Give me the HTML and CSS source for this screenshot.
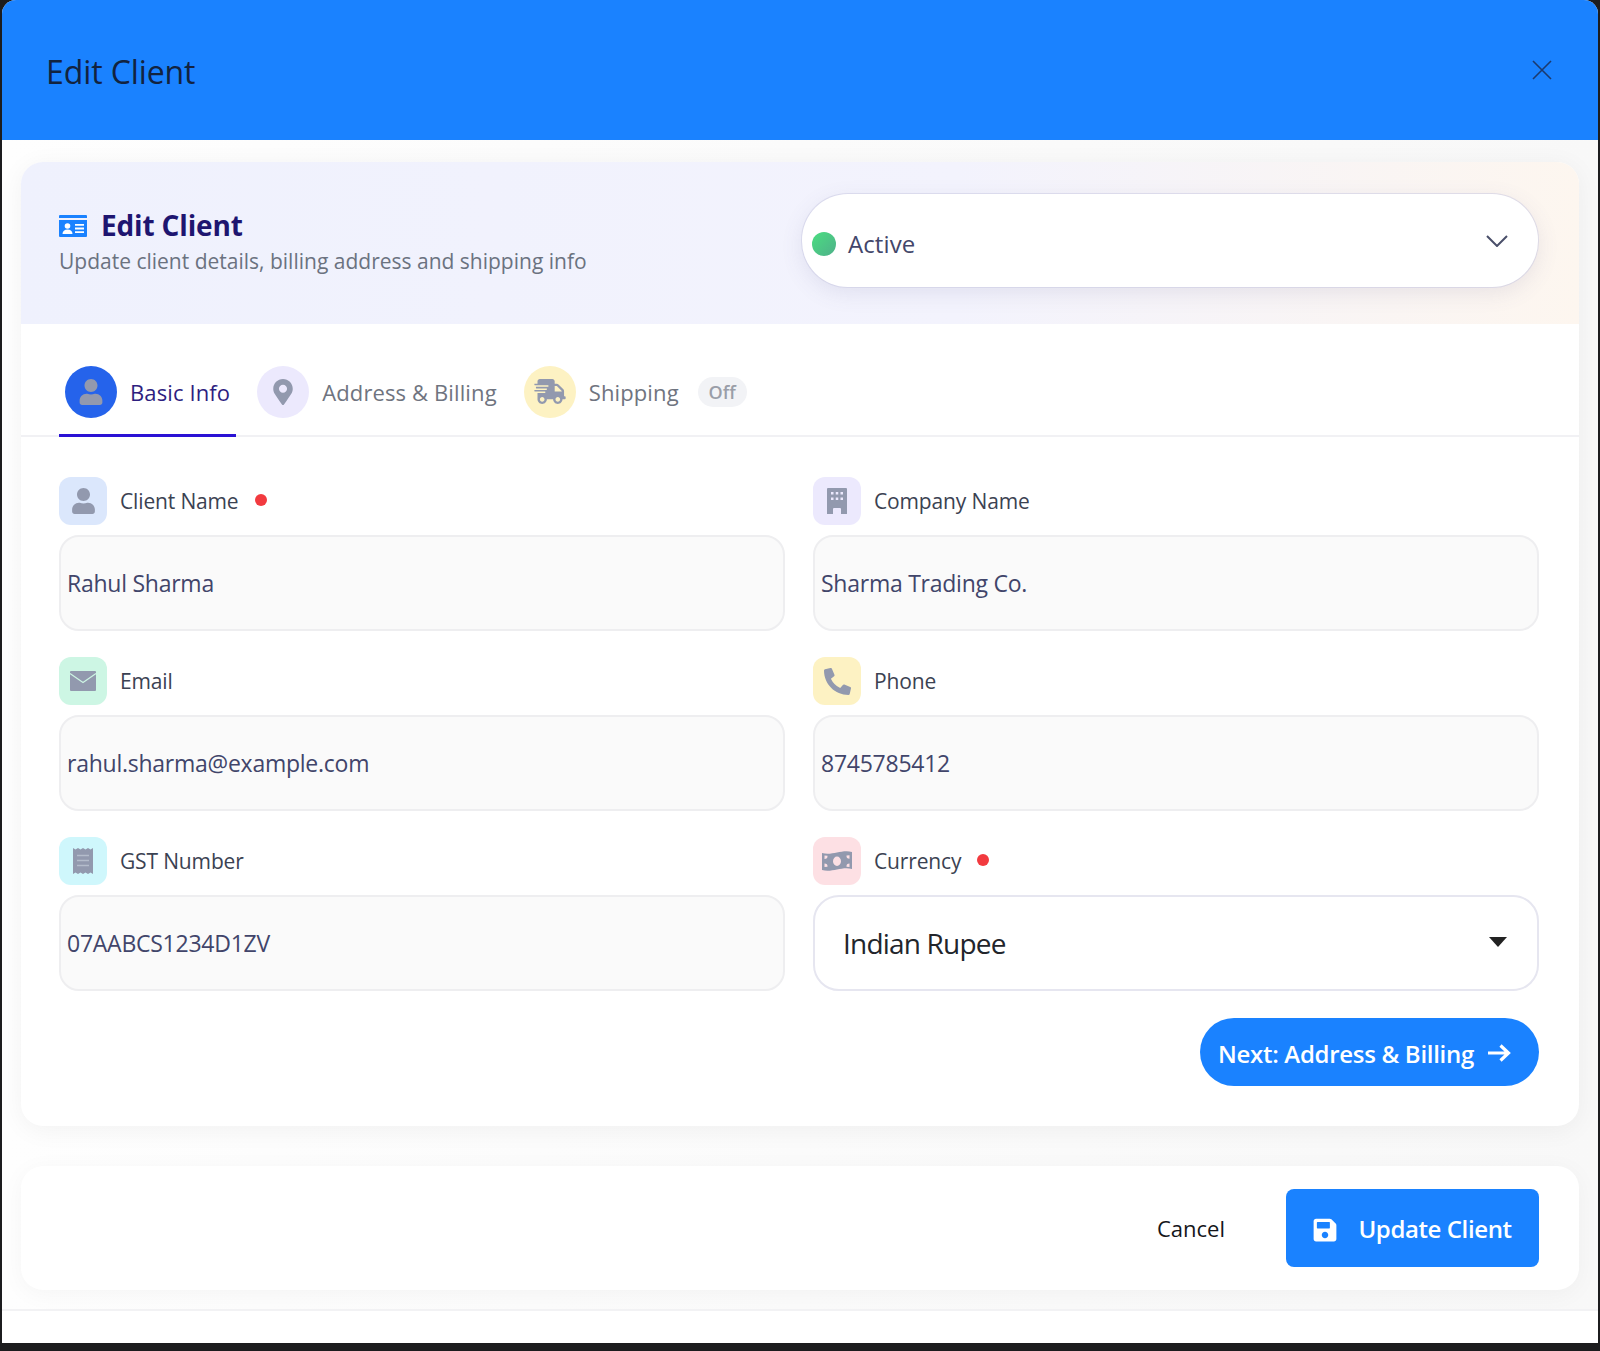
FILE: index.html
```html
<!DOCTYPE html>
<html lang="en">
<head>
  <meta charset="UTF-8" />
  <title>Edit Client</title>
  <link rel="stylesheet" href="styles.css">
</head>
<body>
  <div class="modal">
    <div class="modal-header">
      <h2>Edit Client</h2>
      <button class="close-btn" type="button" aria-label="Close">
        <svg viewBox="0 0 20 20" width="20" height="20"><path d="M1 1l18 18M19 1L1 19" fill="none" stroke="#1c3a6e" stroke-width="1.6"/></svg>
      </button>
    </div>

    <div class="modal-body">
      <div class="main-card">
        <div class="banner">
          <div class="banner-text">
            <div class="banner-title">
              <svg class="id-icon" viewBox="0 0 28 22" width="28" height="22">
                <path d="M1 0h26a1 1 0 0 1 1 1v2H0V1a1 1 0 0 1 1-1z" fill="#1a82ff"/>
                <path d="M0 5h28v16a1 1 0 0 1-1 1H1a1 1 0 0 1-1-1z" fill="#1a82ff"/>
                <circle cx="8.500" cy="11" r="2.800" fill="#fff"/>
                <path d="M3.500 19c0-3 2-4.500 5-4.500s5 1.500 5 4.500z" fill="#fff"/>
                <path d="M16 9h9v1.800h-9zM16 12.600h9v1.800h-9zM16 16.200h9V18h-9z" fill="#fff"/>
              </svg>
              <h3>Edit Client</h3>
            </div>
            <p>Update client details, billing address and shipping info</p>
          </div>
          <div class="status-select">
            <span class="status-dot"></span>
            <span class="status-label">Active</span>
            <svg class="chevron" viewBox="0 0 22 12" width="22" height="12"><path d="M1 1l10 10L21 1" fill="none" stroke="#4a4f6a" stroke-width="2"/></svg>
          </div>
        </div>

        <div class="tabs">
          <div class="tab active">
            <span class="tab-icon">
              <svg viewBox="0 0 448 512" width="24" height="26"><path d="M224 256c70.700 0 128-57.300 128-128S294.700 0 224 0 96 57.300 96 128s57.300 128 128 128zm89.600 32h-16.700c-22.200 10.200-46.900 16-72.900 16s-50.600-5.800-72.900-16h-16.700C60.200 288 0 348.200 0 422.400V464c0 26.500 21.500 48 48 48h352c26.500 0 48-21.500 48-48v-41.600c0-74.200-60.200-134.400-134.400-134.400z"/></svg>
            </span>
            <span>Basic Info</span>
          </div>
          <div class="tab">
            <span class="tab-icon icon-lavender">
              <svg viewBox="0 0 384 512" width="20" height="26"><path d="M172.268 501.670C26.970 291.031 0 269.413 0 192 0 85.961 85.961 0 192 0s192 85.961 192 192c0 77.413-26.970 99.031-172.268 309.670-9.535 13.774-29.930 13.773-39.464 0zM192 272c44.183 0 80-35.817 80-80s-35.817-80-80-80-80 35.817-80 80 35.817 80 80 80z"/></svg>
            </span>
            <span>Address &amp; Billing</span>
          </div>
          <div class="tab">
            <span class="tab-icon icon-yellow">
              <svg viewBox="0 0 640 512" width="32" height="25"><path d="M624 352h-16V243.900c0-12.700-5.100-24.900-14.100-33.900L494 110.100c-9-9-21.200-14.100-33.900-14.100H416V48c0-26.500-21.500-48-48-48H112C85.500 0 64 21.500 64 48v48H8c-4.400 0-8 3.600-8 8v16c0 4.400 3.600 8 8 8h272c4.400 0 8 3.600 8 8v16c0 4.400-3.600 8-8 8H40c-4.400 0-8 3.600-8 8v16c0 4.400 3.600 8 8 8h208c4.400 0 8 3.600 8 8v16c0 4.400-3.600 8-8 8H8c-4.400 0-8 3.600-8 8v16c0 4.400 3.600 8 8 8h208c4.400 0 8 3.600 8 8v16c0 4.400-3.600 8-8 8H64v128c0 53 43 96 96 96s96-43 96-96h128c0 53 43 96 96 96s96-43 96-96h48c8.800 0 16-7.200 16-16v-32c0-8.800-7.200-16-16-16zM160 464c-26.500 0-48-21.500-48-48s21.500-48 48-48 48 21.500 48 48-21.500 48-48 48zm320 0c-26.500 0-48-21.500-48-48s21.500-48 48-48 48 21.500 48 48-21.500 48-48 48zm80-208H416V144h44.100l99.900 99.900V256z"/></svg>
            </span>
            <span>Shipping</span>
            <span class="off-pill">Off</span>
          </div>
        </div>

        <div class="form-grid">
          <div class="field">
            <label>
              <span class="tile icon-blue"><svg viewBox="0 0 448 512" width="23" height="26"><path d="M224 256c70.700 0 128-57.300 128-128S294.700 0 224 0 96 57.300 96 128s57.300 128 128 128zm89.600 32h-16.700c-22.200 10.200-46.900 16-72.900 16s-50.600-5.800-72.900-16h-16.700C60.200 288 0 348.200 0 422.400V464c0 26.500 21.500 48 48 48h352c26.500 0 48-21.500 48-48v-41.600c0-74.200-60.200-134.400-134.400-134.400z"/></svg></span>
              Client Name <span class="required"></span>
            </label>
            <input type="text" value="Rahul Sharma" />
          </div>
          <div class="field">
            <label>
              <span class="tile icon-lavender"><svg viewBox="0 0 20 26" width="20" height="26"><path fill-rule="evenodd" d="M1 0h18a1 1 0 0 1 1 1v25h-6v-5a1 1 0 0 0-1-1H7a1 1 0 0 0-1 1v5H0V1a1 1 0 0 1 1-1zM4 4v2.500h2.500V4zm4.750 0v2.500h2.500V4zM13.500 4v2.500H16V4zM4 9.500V12h2.500V9.500zm4.750 0V12h2.500V9.500zm4.750 0V12H16V9.500z"/></svg></span>
              Company Name
            </label>
            <input type="text" value="Sharma Trading Co." />
          </div>
          <div class="field">
            <label>
              <span class="tile icon-green"><svg viewBox="0 0 26 20" width="26" height="20"><path d="M1 0h24a1 1 0 0 1 1 1v18a1 1 0 0 1-1 1H1a1 1 0 0 1-1-1V1a1 1 0 0 1 1-1z"/><path d="M0 2.500l13 9 13-9" fill="none" stroke="#cdf6e4" stroke-width="1.200"/></svg></span>
              Email
            </label>
            <input type="text" value="rahul.sharma@example.com" />
          </div>
          <div class="field">
            <label>
              <span class="tile icon-yellow"><svg viewBox="0 0 512 512" width="27" height="27"><path d="M497.390 361.800l-112-48a24 24 0 0 0-28 6.900l-49.600 60.600A370.660 370.660 0 0 1 130.600 204.110l60.600-49.600a23.940 23.940 0 0 0 6.900-28l-48-112A24.160 24.160 0 0 0 122.600.610l-104 24A24 24 0 0 0 0 48c0 256.500 207.900 464 464 464a24 24 0 0 0 23.400-18.600l24-104a24.290 24.290 0 0 0-14.010-27.600z"/></svg></span>
              Phone
            </label>
            <input type="text" value="8745785412" />
          </div>
          <div class="field">
            <label>
              <span class="tile icon-cyan"><svg viewBox="0 0 20 26" width="20" height="26"><path d="M0 0l2.500 1.500L5 0l2.500 1.500L10 0l2.500 1.500L15 0l2.500 1.500L20 0v26l-2.500-1.500L15 26l-2.500-1.500L10 26l-2.500-1.500L5 26l-2.500-1.500L0 26z"/><path d="M4 7.500h12M4 12.500h12M4 17.500h12" fill="none" stroke="#b4bccb" stroke-width="1.500"/></svg></span>
              GST Number
            </label>
            <input type="text" value="07AABCS1234D1ZV" />
          </div>
          <div class="field">
            <label>
              <span class="tile icon-pink"><svg viewBox="0 0 30 22" width="30" height="22"><path fill-rule="evenodd" d="M0 3c5 1.500 10 .5 15-.5s10-2 15-.5v17c-5-1.500-10-.5-15 .5s-10 2-15 .5zM15 6.500a4 4.700 0 1 0 0 9.400 4 4.700 0 1 0 0-9.400zM2.500 5.500V9a3 3 0 0 0 3-3.200zm25 11.500v-3.500a3 3 0 0 0-3 3.200zM2.500 13.500V17l3-.3a3 3 0 0 0-3-3.200zM27.500 5.200l-3 .3A3 3 0 0 0 27.500 8.700z"/></svg></span>
              Currency <span class="required"></span>
            </label>
            <div class="currency-select">
              <span>Indian Rupee</span>
              <span class="caret"></span>
            </div>
          </div>
        </div>

        <div class="form-actions">
          <button class="next-btn" type="button">
            Next: Address &amp; Billing
            <svg viewBox="0 0 24 18" width="24" height="18"><path d="M1 9h20M13.500 1.500L21.500 9l-8 7.500" fill="none" stroke="#fff" stroke-width="3.200"/></svg>
          </button>
        </div>
      </div>

      <div class="footer-card">
        <button class="cancel-btn" type="button">Cancel</button>
        <button class="update-btn" type="button">
          <svg viewBox="0 0 448 512" width="24" height="26"><path fill="#fff" d="M433.941 129.941l-83.882-83.882A48 48 0 0 0 316.118 32H48C21.490 32 0 53.490 0 80v352c0 26.510 21.490 48 48 48h352c26.510 0 48-21.490 48-48V163.882a48 48 0 0 0-14.059-33.941zM224 416c-35.346 0-64-28.654-64-64 0-35.346 28.654-64 64-64s64 28.654 64 64c0 35.346-28.654 64-64 64zm96-304.520V212c0 6.627-5.373 12-12 12H76c-6.627 0-12-5.373-12-12V108c0-6.627 5.373-12 12-12h228.520c3.183 0 6.235 1.264 8.485 3.515l3.480 3.480A11.996 11.996 0 0 1 320 111.480z"/></svg>
          Update Client
        </button>
      </div>
    </div>
  </div>
</body>
</html>
```

FILE: styles.css
```css
* {
  box-sizing: border-box;
}

html, body {
  height: 100%;
}

body {
  margin: 0;
  background-color: #1c1c1e;
  font-family: "Open Sans", "Noto Sans", sans-serif;
  overflow: hidden;
}

.modal {
  margin: 0 2px;
  height: 1343px;
  background-color: #fff;
  border-radius: 14px 14px 0 0;
  overflow: hidden;
}

.modal-header {
  height: 140px;
  background-color: #1a82ff;
  padding: 0 46px 0 44px;
  display: flex;
  align-items: center;
  justify-content: space-between;
}

.modal-header h2 {
  margin: 2px 0 0;
  font-size: 32px;
  font-weight: 400;
  letter-spacing: -0.1px;
  color: #12233f;
}

.close-btn {
  border: none;
  background: none;
  padding: 0;
  display: flex;
  margin-top: -1px;
}

.modal-body {
  padding: 22px 19px 0;
  height: 1171px;
  border-bottom: 2px solid #f2f2f4;
  background: linear-gradient(90deg, #fefefe, #fbfbfb 50%, #f8f8f8);
}

.main-card {
  background-color: #fff;
  border-radius: 22px;
  box-shadow: 0 4px 26px rgba(0, 0, 0, 0.05);
  overflow: hidden;
  height: 964px;
}

.banner {
  height: 162px;
  padding: 0 41px 0 38px;
  display: flex;
  align-items: center;
  justify-content: space-between;
  background: linear-gradient(90deg, #eff1fd 0%, #f3f3fd 60%, #fdf6ef 100%);
}

.banner-text {
  margin-top: -5px;
}

.banner-title {
  display: flex;
  align-items: center;
  gap: 14px;
}

.id-icon {
  margin-top: 3px;
}

.banner-title h3 {
  margin: 0;
  font-size: 28px;
  font-weight: 700;
  letter-spacing: -0.15px;
  color: #1e1570;
  line-height: 36px;
}

.banner-text p {
  margin: 4px 0 0;
  font-size: 21px;
  color: #6b7280;
}

.status-select {
  width: 736px;
  height: 93px;
  margin-top: -5px;
  padding: 6px 30px 0 10px;
  background-color: #fff;
  border-radius: 46px;
  box-shadow: 0 0 0 1px rgba(200, 200, 225, 0.5), 0 6px 22px rgba(90, 90, 140, 0.12);
  display: flex;
  align-items: center;
  gap: 12px;
}

.status-dot {
  width: 24px;
  height: 24px;
  border-radius: 50%;
  background: linear-gradient(135deg, #4ade80, #4fb08a);
}

.status-label {
  flex: 1;
  font-size: 24px;
  letter-spacing: 0.1px;
  color: #43466a;
}

.chevron {
  margin-top: -6px;
}

.tabs {
  height: 113px;
  padding: 43px 19px 0 38px;
  border-bottom: 2px solid #f1f1f4;
  display: flex;
  align-items: flex-start;
  gap: 15px;
}

.tab {
  display: flex;
  align-items: center;
  gap: 13px;
  height: 70px;
  padding: 0 6px 18px;
  border-bottom: 3px solid transparent;
  font-size: 22px;
  letter-spacing: 0.12px;
  color: #6f7480;
}

.tab.active {
  color: #2e1e80;
  border-bottom-color: #2a12d4;
}

.tab-icon {
  width: 52px;
  height: 52px;
  border-radius: 50%;
  display: flex;
  align-items: center;
  justify-content: center;
}

.tab-icon svg, .tile svg {
  fill: #9299ae;
}

.tab.active .tab-icon {
  background-color: #2563eb;
}

.off-pill {
  margin-left: 6px;
  width: 49px;
  height: 30px;
  border-radius: 15px;
  background-color: #f2f3f6;
  color: #9a9ea8;
  font-size: 18px;
  font-weight: 600;
  display: flex;
  align-items: center;
  justify-content: center;
}

.icon-blue { background-color: #dbe7fc; }
.icon-lavender { background-color: #ece9fd; }
.icon-green { background-color: #cdf6e4; }
.icon-yellow { background-color: #fdf2c3; }
.icon-cyan { background-color: #cff7fc; }
.icon-pink { background-color: #fde0e4; }

.form-grid {
  padding: 40px 40px 0 38px;
  display: grid;
  grid-template-columns: 1fr 1fr;
  column-gap: 28px;
  row-gap: 26px;
}

.field {
  display: flex;
  flex-direction: column;
  gap: 10px;
}

.field label {
  display: flex;
  align-items: center;
  gap: 13px;
  font-size: 21px;
  letter-spacing: -0.15px;
  color: #3b4252;
}

.tile {
  width: 48px;
  height: 48px;
  border-radius: 12px;
  display: flex;
  align-items: center;
  justify-content: center;
}

.required {
  width: 12px;
  height: 12px;
  border-radius: 50%;
  background-color: #f23a3f;
  margin-left: 3px;
  margin-top: -2px;
}

.field input {
  width: 100%;
  height: 96px;
  padding: 0 6px;
  background-color: #fafafa;
  border: 2px solid #eeeef0;
  border-radius: 20px;
  font-family: inherit;
  font-size: 23px;
  letter-spacing: -0.25px;
  color: #41456a;
  outline: none;
}

.currency-select {
  height: 96px;
  padding: 0 30px 0 28px;
  background-color: #fff;
  border: 2px solid #e6e6f0;
  border-radius: 26px;
  display: flex;
  align-items: center;
  justify-content: space-between;
  font-size: 28px;
  letter-spacing: -0.8px;
  color: #22252b;
}

.caret {
  border-left: 9px solid transparent;
  border-right: 9px solid transparent;
  border-top: 10px solid #222;
  margin-top: -2px;
}

.form-actions {
  padding: 27px 40px 0 0;
  display: flex;
  justify-content: flex-end;
}

.next-btn {
  width: 339px;
  height: 68px;
  padding: 2px 0 0 18px;
  border: none;
  border-radius: 34px;
  background-color: #1a82ff;
  color: #fff;
  font-family: inherit;
  font-size: 24px;
  font-weight: 600;
  letter-spacing: -0.3px;
  display: flex;
  align-items: center;
  gap: 13px;
}

.footer-card {
  margin-top: 40px;
  height: 124px;
  padding: 0 40px 0 0;
  background-color: #fff;
  border-radius: 22px;
  box-shadow: 0 4px 24px rgba(0, 0, 0, 0.04);
  display: flex;
  align-items: center;
  justify-content: flex-end;
  gap: 61px;
}

.cancel-btn {
  border: none;
  background: none;
  padding: 0;
  font-family: inherit;
  font-size: 22px;
  font-weight: 500;
  color: #14161a;
}

.update-btn {
  width: 253px;
  height: 78px;
  border: none;
  border-radius: 8px;
  background-color: #1a82ff;
  color: #fff;
  font-family: inherit;
  font-size: 24px;
  font-weight: 600;
  letter-spacing: -0.4px;
  display: flex;
  align-items: center;
  justify-content: center;
  gap: 21px;
}

.update-btn svg {
  margin-top: 4px;
}
```
